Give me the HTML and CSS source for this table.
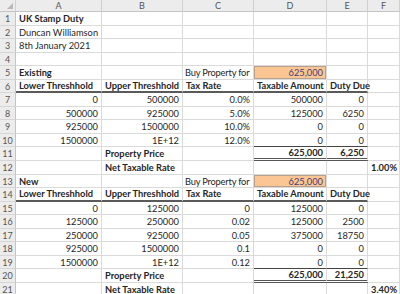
FILE: index.html
```html
<!DOCTYPE html>
<html>
<head>
<meta charset="utf-8">
<link rel="stylesheet" href="styles.css">
</head>
<body>
<div class="sheet">
  <div class="ch corner"><span class="tri"></span></div><div class="ch">A</div><div class="ch">B</div><div class="ch">C</div><div class="ch">D</div><div class="ch">E</div><div class="ch">F</div>

  <div class="rh">1</div><div class="c b">UK Stamp Duty</div><div class="c"></div><div class="c"></div><div class="c"></div><div class="c"></div><div class="c"></div>
  <div class="rh">2</div><div class="c">Duncan Williamson</div><div class="c"></div><div class="c"></div><div class="c"></div><div class="c"></div><div class="c"></div>
  <div class="rh">3</div><div class="c">8th January 2021</div><div class="c"></div><div class="c"></div><div class="c"></div><div class="c"></div><div class="c"></div>
  <div class="rh">4</div><div class="c"></div><div class="c"></div><div class="c"></div><div class="c"></div><div class="c"></div><div class="c"></div>
  <div class="rh">5</div><div class="c b">Existing</div><div class="c"></div><div class="c tight">Buy Property for</div><div class="c r input">625,000</div><div class="c"></div><div class="c"></div>
  <div class="rh">6</div><div class="c b hd">Lower Threshhold</div><div class="c b hd">Upper Threshhold</div><div class="c b hd">Tax Rate</div><div class="c b hd">Taxable Amount</div><div class="c b hd">Duty Due</div><div class="c"></div>
  <div class="rh">7</div><div class="c r">0</div><div class="c r">500000</div><div class="c r">0.0%</div><div class="c r">500000</div><div class="c r">0</div><div class="c"></div>
  <div class="rh">8</div><div class="c r">500000</div><div class="c r">925000</div><div class="c r">5.0%</div><div class="c r">125000</div><div class="c r">6250</div><div class="c"></div>
  <div class="rh">9</div><div class="c r">925000</div><div class="c r">1500000</div><div class="c r">10.0%</div><div class="c r">0</div><div class="c r">0</div><div class="c"></div>
  <div class="rh">10</div><div class="c r">1500000</div><div class="c r">1E+12</div><div class="c r">12.0%</div><div class="c r top">0</div><div class="c r top">0</div><div class="c"></div>
  <div class="rh">11</div><div class="c"></div><div class="c b">Property Price</div><div class="c"></div><div class="c r b tot">625,000</div><div class="c r b tot">6,250</div><div class="c"></div>
  <div class="rh">12</div><div class="c"></div><div class="c b">Net Taxable Rate</div><div class="c"></div><div class="c"></div><div class="c"></div><div class="c r b">1.00%</div>
  <div class="rh">13</div><div class="c b">New</div><div class="c"></div><div class="c tight">Buy Property for</div><div class="c r input">625,000</div><div class="c"></div><div class="c"></div>
  <div class="rh">14</div><div class="c b hd">Lower Threshhold</div><div class="c b hd">Upper Threshhold</div><div class="c b hd">Tax Rate</div><div class="c b hd">Taxable Amount</div><div class="c b hd">Duty Due</div><div class="c"></div>
  <div class="rh">15</div><div class="c r">0</div><div class="c r">125000</div><div class="c r">0</div><div class="c r">125000</div><div class="c r">0</div><div class="c"></div>
  <div class="rh">16</div><div class="c r">125000</div><div class="c r">250000</div><div class="c r">0.02</div><div class="c r">125000</div><div class="c r">2500</div><div class="c"></div>
  <div class="rh">17</div><div class="c r">250000</div><div class="c r">925000</div><div class="c r">0.05</div><div class="c r">375000</div><div class="c r">18750</div><div class="c"></div>
  <div class="rh">18</div><div class="c r">925000</div><div class="c r">1500000</div><div class="c r">0.1</div><div class="c r">0</div><div class="c r">0</div><div class="c"></div>
  <div class="rh">19</div><div class="c r">1500000</div><div class="c r">1E+12</div><div class="c r">0.12</div><div class="c r top">0</div><div class="c r top">0</div><div class="c"></div>
  <div class="rh">20</div><div class="c"></div><div class="c b">Property Price</div><div class="c"></div><div class="c r b tot">625,000</div><div class="c r b tot">21,250</div><div class="c"></div>
  <div class="rh">21</div><div class="c"></div><div class="c b">Net Taxable Rate</div><div class="c"></div><div class="c"></div><div class="c"></div><div class="c r b">3.40%</div>
</div>
</body>
</html>
```
FILE: styles.css
```css
html, body {
  margin: 0;
  padding: 0;
  background: #ffffff;
  overflow: hidden;
}
.sheet {
  display: grid;
  grid-template-columns: 16px 86px 81px 71px 73px 41px 32px;
  grid-template-rows: 12px repeat(21, 13.55px);
  font-family: Lato, "Open Sans", sans-serif;
  font-size: 9.3px;
  color: #262626;
}
.ch {
  background: #ececec;
  color: #555;
  border-right: 1px solid #d0d0d0;
  border-bottom: 1px solid #c4c4c4;
  text-align: center;
  line-height: 11px;
  font-size: 9px;
  box-sizing: border-box;
}
.ch:last-child {
  border-right: 0;
}
.corner {
  position: relative;
}
.tri {
  position: absolute;
  right: 2px;
  bottom: 2px;
  width: 0;
  height: 0;
  border-left: 6px solid transparent;
  border-bottom: 6px solid #b8b8b8;
}
.rh {
  background: #ececec;
  color: #555;
  border-right: 1px solid #c4c4c4;
  border-bottom: 1px solid #d6d6d6;
  text-align: center;
  font-size: 9px;
  line-height: 13px;
  box-sizing: border-box;
}
.c {
  border-right: 1px solid #dadada;
  border-bottom: 1px solid #dadada;
  box-sizing: border-box;
  padding: 0 3px;
  line-height: 13px;
  white-space: nowrap;
  overflow: visible;
}
.tight {
  padding-left: 2px;
  letter-spacing: -0.2px;
}
.b { font-weight: 700; }
.r { text-align: right; }
.hd {
  border-bottom: 2px solid #5a5a5a;
  line-height: 12px;
}
.top { border-bottom: 1px solid #444; }
.tot {
  border-bottom: 3px double #555;
  line-height: 11px;
}
.input {
  background: #fbc594;
  color: #3f3f76;
  box-shadow: inset 0 0 0 1px #b9a08a;
}
```
